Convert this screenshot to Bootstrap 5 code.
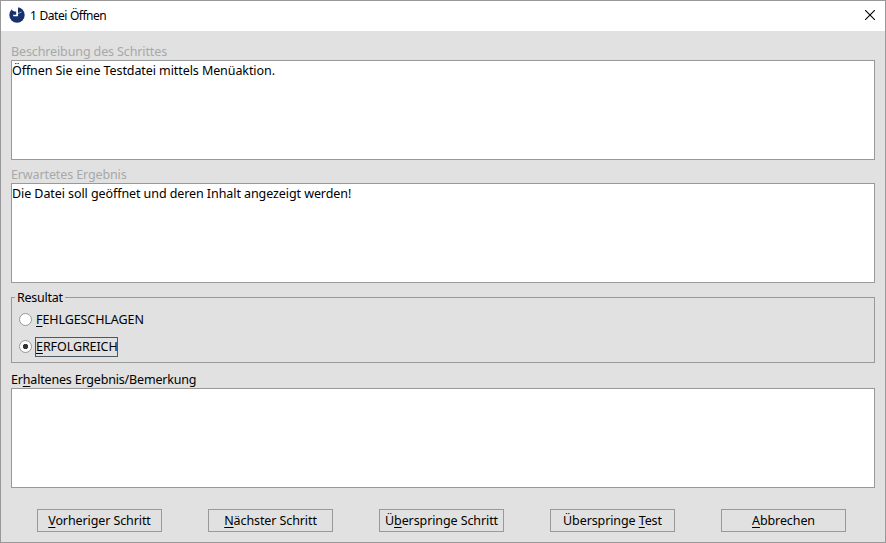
<!DOCTYPE html>
<html lang="de">
<head>
<meta charset="utf-8">
<title>1 Datei Öffnen</title>
<link href="https://cdn.jsdelivr.net/npm/bootstrap@5.3.0/dist/css/bootstrap.min.css" rel="stylesheet">
<style>
body{font:12.5px/16px "Noto Sans","Open Sans",sans-serif;letter-spacing:-.08px;color:#000;overflow:hidden}
.dialog{width:886px;height:543px;border:1px solid #999;background:#e1e1e1}
.titlebar{height:30px;padding:0 10px 2px 8px;font-size:12px;letter-spacing:-.5px;word-spacing:.6px}
.titlebar .logo{margin-right:5px}
.titlebar span{padding-top:1px}
.content{padding:12px 10px 0}
.caption{height:17px;line-height:17px;white-space:nowrap}
.off{color:#a8a8a8;letter-spacing:-.12px}
.expected{margin-top:6px}
.remark{letter-spacing:-.18px}
.field{display:block;width:864px;height:100px;border:1px solid #999;border-radius:0;background:#fff;color:#000;padding:2px 0 0 0;font:inherit;letter-spacing:inherit;resize:none;outline:0}
.result{height:66px;margin:14px 0 8px;border:1px solid #999;padding:12px 7px 0}
.result-title{position:absolute;left:3px;top:-9px;width:auto;float:none;padding:0 2px;margin:0;font-size:inherit;line-height:17px;letter-spacing:-.25px;background:#e1e1e1}
.choice{height:20px;margin-bottom:7px}
.choice input{appearance:none;width:13px;height:13px;border:1px solid #999;border-radius:50%;background:#fff;margin:0 3px 2px 0;flex:none}
.choice input:checked{background:radial-gradient(circle,#333 0 2.3px,#fff 3px)}
.choice .txt{height:20px;line-height:18px;border:1px solid transparent;white-space:nowrap}
.choice .focus{border-color:#4c5a63;width:83px}
.actions{gap:46px;padding:0 26px;margin-top:21px}
.actions .btn{width:125px;height:23px;padding:0;border:1px solid #999;border-radius:0;font-size:inherit;letter-spacing:-.1px;line-height:21px;color:#000;white-space:nowrap}
u{text-underline-offset:2px;text-decoration-thickness:1px;text-decoration-skip-ink:none}
</style>
</head>
<body>
<div class="dialog d-flex flex-column">
  <header class="titlebar bg-white d-flex align-items-center">
    <svg class="logo" width="16" height="16" viewBox="0 0 16 16"><circle cx="8" cy="8" r="7.700" fill="#17316f"/><path d="M4.500 0H9V9.300H4.200V7.800H7.200V4.500H5.500L2.500 3Z" fill="#fff"/><path d="M9 6.500L12.500 5" stroke="#fff" stroke-width=".6"/></svg>
    <span>1 Datei Öffnen</span>
    <svg class="ms-auto" width="10" height="10" viewBox="0 0 10 10"><path d="M0 0l10 10M10 0L0 10" stroke="#000" stroke-width="1.1"/></svg>
  </header>
  <main class="content">
    <label class="caption off d-block" for="a">Beschreibung des Schrittes</label>
    <textarea id="a" class="field" readonly>Öffnen Sie eine Testdatei mittels Menüaktion.</textarea>
    <label class="caption off expected d-block" for="b">Erwartetes Ergebnis</label>
    <textarea id="b" class="field" readonly>Die Datei soll geöffnet und deren Inhalt angezeigt werden!</textarea>
    <fieldset class="result position-relative">
      <legend class="result-title">Resultat</legend>
      <label class="choice d-flex align-items-center"><input type="radio" name="r"><span class="txt"><u>F</u>EHLGESCHLAGEN</span></label>
      <label class="choice d-flex align-items-center"><input type="radio" name="r" checked><span class="txt focus"><u>E</u>RFOLGREICH</span></label>
    </fieldset>
    <label class="caption remark d-block" for="c">Er<u>h</u>altenes Ergebnis/Bemerkung</label>
    <textarea id="c" class="field"></textarea>
    <div class="actions d-flex">
      <button class="btn"><u>V</u>orheriger Schritt</button>
      <button class="btn"><u>N</u>ächster Schritt</button>
      <button class="btn">Ü<u>b</u>erspringe Schritt</button>
      <button class="btn">Überspringe <u>T</u>est</button>
      <button class="btn"><u>A</u>bbrechen</button>
    </div>
  </main>
</div>
</body>
</html>
